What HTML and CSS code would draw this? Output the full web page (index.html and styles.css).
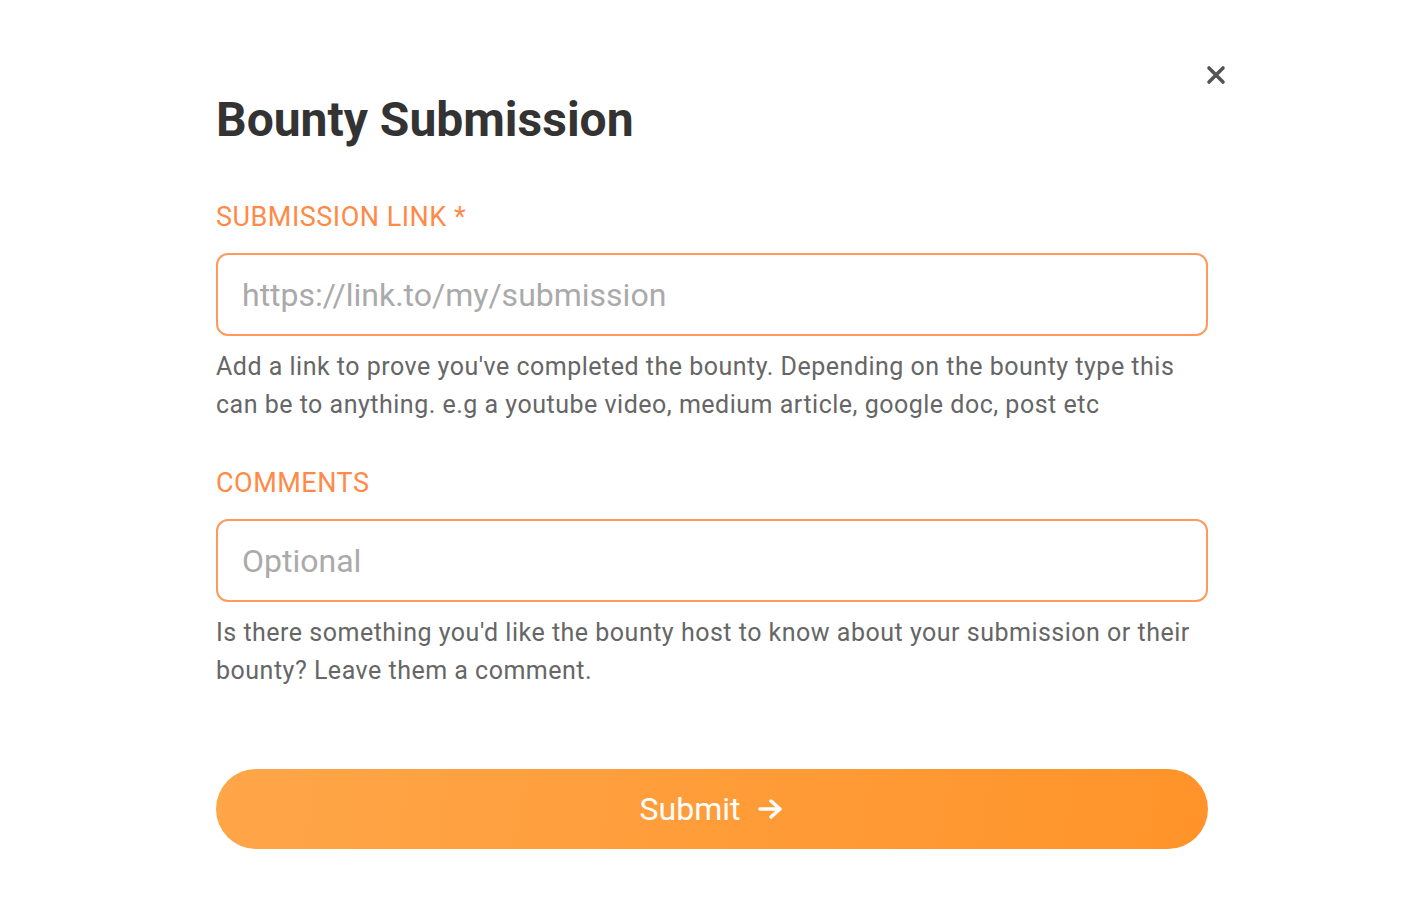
FILE: index.html
```html
<!DOCTYPE html>
<html lang="en">
<head>
    <meta charset="UTF-8">
    <meta name="viewport" content="width=device-width, initial-scale=1.0">
    <title>Bounty Submission</title>
    <link rel="stylesheet" href="styles.css">
</head>
<body>
    <div class="modal">
        <button class="close" type="button" aria-label="Close">
            <svg width="20" height="20" viewBox="0 0 20 20"><path d="M3 3L17 17M17 3L3 17" stroke="#555" stroke-width="3.6" stroke-linecap="round"/></svg>
        </button>
        <h1>Bounty Submission</h1>
        <form class="form">
            <label for="link">SUBMISSION LINK *</label>
            <input type="text" id="link" placeholder="https://link.to/my/submission">
            <p class="hint">Add a link to prove you've completed the bounty. Depending on the bounty type this can be to anything. e.g a youtube video, medium article, google doc, post etc</p>

            <label for="comments">COMMENTS</label>
            <input type="text" id="comments" placeholder="Optional">
            <p class="hint">Is there something you'd like the bounty host to know about your submission or their bounty? Leave them a comment.</p>

            <button class="submit" type="submit">Submit
                <svg width="26" height="22" viewBox="0 0 26 22"><path d="M2 11H22M13 3L22 11L13 19" fill="none" stroke="#fff" stroke-width="3.4" stroke-linecap="round" stroke-linejoin="round"/></svg>
            </button>
        </form>
    </div>
</body>
</html>
```

FILE: styles.css
```css
body { margin: 0; background: #fff; font-family: Roboto, "Noto Sans", sans-serif; }
.modal { position: relative; width: 992px; margin: 0 auto; padding: 90px 0 0 0; }
.close { position: absolute; top: 63px; right: -20px; background: none; border: none; padding: 2px; cursor: pointer; }
h1 { margin: 0 0 51px 0; font-size: 48px; font-weight: 700; color: #333; line-height: 60px; }
.form { display: flex; flex-direction: column; }
.form label { color: #ff8a47; font-size: 27px; letter-spacing: 0.5px; line-height: 32px; margin-bottom: 20px; }
.form input {
    height: 83px;
    box-sizing: border-box;
    border: 2px solid #ff9a5e;
    border-radius: 12px;
    padding: 0 24px;
    font-family: inherit;
    font-size: 32px;
    color: #333;
    outline: none;
}
.form input::placeholder { color: #aaa; }
.hint { margin: 12px 0 43px 0; color: #666; font-size: 25px; letter-spacing: 0.5px; line-height: 38px; }
.submit {
    margin-top: 36px;
    height: 80px;
    border: none;
    border-radius: 40px;
    background: linear-gradient(100deg, #ffa649, #ff9329);
    color: #fff;
    font-family: inherit;
    font-size: 32px;
    display: flex;
    align-items: center;
    justify-content: center;
    gap: 18px;
    cursor: pointer;
}
```
